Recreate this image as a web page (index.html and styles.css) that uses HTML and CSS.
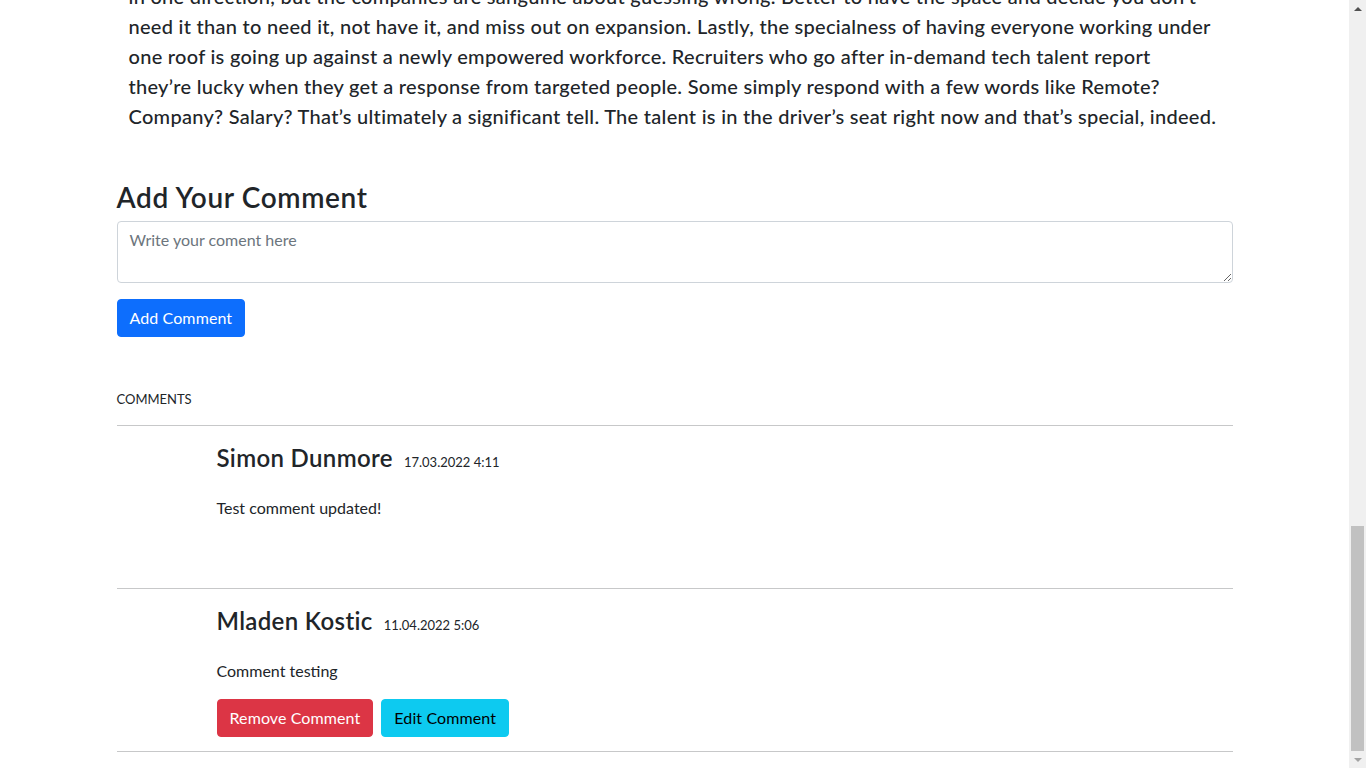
FILE: index.html
```html
<!DOCTYPE html>
<html lang="en">
<head>
<meta charset="utf-8">
<title>Post</title>
<link rel="stylesheet" href="styles.css">
</head>
<body>
<main class="viewport">
  <div class="container">
    <article class="post">
      <p class="post-text">in one direction, but the companies are sanguine about guessing wrong. Better to have the space and decide you don’t need it than to need it, not have it, and miss out on expansion. Lastly, the specialness of having everyone working under one roof is going up against a newly empowered workforce. Recruiters who go after in-demand tech talent report they’re&nbsp;lucky when they get a response from targeted people. Some simply respond with a few words like Remote? Company? Salary? That’s ultimately a significant tell. The talent is in the driver’s seat right now and that’s special, indeed.</p>
    </article>

    <section class="add-comment">
      <h3 class="add-comment-title">Add Your Comment</h3>
      <form class="comment-form">
        <textarea class="form-control" rows="2" placeholder="Write your coment here"></textarea>
        <button type="button" class="btn btn-primary">Add Comment</button>
      </form>
    </section>

    <section class="comments">
      <h6 class="comments-title">COMMENTS</h6>
      <hr class="divider">
      <div class="comment">
        <h4 class="comment-head"><span class="comment-author">Simon Dunmore</span><span class="comment-date">17.03.2022 4:11</span></h4>
        <p class="comment-text">Test comment updated!</p>
        <div class="comment-actions"></div>
      </div>
      <hr class="divider">
      <div class="comment">
        <h4 class="comment-head"><span class="comment-author">Mladen Kostic</span><span class="comment-date">11.04.2022 5:06</span></h4>
        <p class="comment-text">Comment testing</p>
        <div class="comment-actions">
          <button type="button" class="btn btn-danger">Remove Comment</button>
          <button type="button" class="btn btn-info">Edit Comment</button>
        </div>
      </div>
      <hr class="divider">
    </section>
  </div>
</main>
<aside class="scrollbar" aria-hidden="true">
  <div class="scroll-btn scroll-up"><span class="arrow arrow-up"></span></div>
  <div class="scroll-track"><div class="scroll-thumb"></div></div>
  <div class="scroll-btn scroll-down"><span class="arrow arrow-down"></span></div>
</aside>
</body>
</html>
```
FILE: styles.css
```css
* { box-sizing: border-box; }

html, body { height: 100%; }

body {
  margin: 0;
  display: flex;
  overflow: hidden;
  background: #fff;
  color: #212529;
  font-family: Lato, "Liberation Sans", sans-serif;
  font-size: 16px;
  line-height: 1.5;
}

.viewport {
  flex: 1;
  min-width: 0;
  height: 100vh;
  display: flex;
  flex-direction: column;
  justify-content: flex-end;
  overflow: hidden;
}

.container {
  flex-shrink: 0;
  width: 100%;
  max-width: 1140px;
  margin: 0 auto;
  padding: 0 12px;
}

/* article */
.post-text {
  margin: 0;
  padding: 0 12px;
  font-size: 20px;
  font-weight: 500;
  line-height: 30px;
  letter-spacing: 0.28px;
}

/* add comment */
.add-comment { margin-top: 50px; }

.add-comment-title {
  margin: 0 0 6px;
  font-size: 28px;
  font-weight: 600;
  line-height: 1.2;
  letter-spacing: 0.64px;
}

.form-control {
  display: block;
  width: 100%;
  padding: 6px 12px;
  font-family: inherit;
  font-size: 16px;
  line-height: 24px;
  color: #212529;
  background: #fff;
  border: 1px solid #ced4da;
  border-radius: 4px;
  resize: vertical;
}

.form-control::placeholder { color: #6c757d; opacity: 1; }

.btn {
  display: inline-block;
  padding: 6px 12px;
  font-family: inherit;
  font-size: 16px;
  line-height: 24px;
  letter-spacing: 0.1px;
  border: 1px solid transparent;
  border-radius: 4px;
  cursor: pointer;
}

.btn-primary { background: #0d6efd; border-color: #0d6efd; color: #fff; }
.btn-danger  { background: #dc3545; border-color: #dc3545; color: #fff; }
.btn-info    { background: #0dcaf0; border-color: #0dcaf0; color: #000; }

.comment-form .btn { margin-top: 16px; }

/* comments list */
.comments-title {
  margin: 53px 0 16px;
  font-size: 13px;
  font-weight: 400;
  line-height: 19.5px;
}

.divider {
  margin: 14px 0 18px;
  border: 0;
  border-top: 1px solid #212529;
  opacity: 0.25;
}

.comments .divider:last-child { margin-bottom: 16px; }

.comment { padding-left: 100px; }

.comment-head {
  margin: 0 0 23px;
  display: flex;
  align-items: baseline;
  gap: 11px;
  font-size: 24px;
  font-weight: 600;
  line-height: 28.8px;
}

.comment-author { letter-spacing: 0.35px; }

.comment-date {
  font-size: 13px;
  font-weight: 400;
  line-height: 1;
}

.comment-text { margin: 0 0 16px; }

.comment-actions {
  display: flex;
  gap: 8px;
  min-height: 38px;
}

/* window scrollbar */
.scrollbar {
  flex: 0 0 17px;
  height: 100vh;
  display: flex;
  flex-direction: column;
  background: #f0f0f0;
}

.scroll-btn {
  height: 17px;
  display: flex;
  align-items: center;
  justify-content: center;
}

.arrow {
  width: 0;
  height: 0;
  border-left: 4px solid transparent;
  border-right: 4px solid transparent;
}

.arrow-up { border-bottom: 4px solid #505050; }
.arrow-down { border-top: 4px solid #a3a3a3; }

.scroll-track {
  flex: 1;
  display: flex;
  flex-direction: column;
  justify-content: flex-end;
  align-items: center;
}

.scroll-thumb {
  width: 13px;
  height: 225px;
  background: #c1c1c1;
}
```
